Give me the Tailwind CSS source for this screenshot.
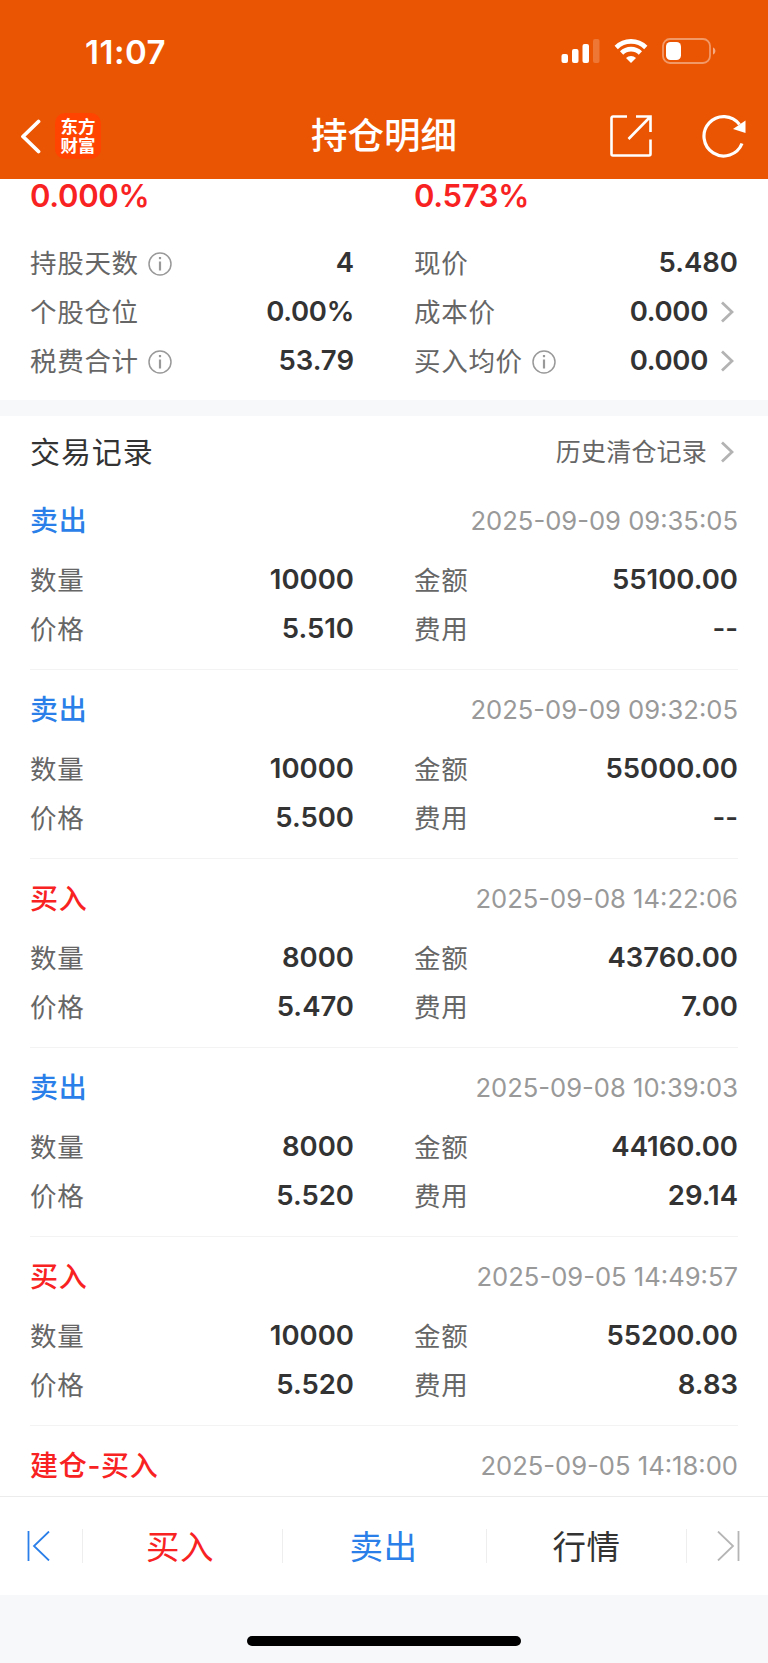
<!DOCTYPE html>
<html lang="zh-CN">
<head>
    <meta charset="UTF-8">
    <meta name="viewport" content="width=device-width, initial-scale=1.0">
    <title>持仓明细</title>
    <script src="https://cdn.jsdelivr.net/npm/@tailwindcss/browser@4"></script>
</head>
<body class="bg-white font-[Inter,'Noto_Sans_CJK_SC',sans-serif] text-[#333]">
    <div class="flex flex-col h-[1663px] overflow-hidden">
        <!-- Header -->
        <header class="h-[179px] shrink-0 bg-[#ea5504] text-white">
            <!-- Status bar -->
            <div class="flex items-center justify-between h-[102px] pl-[85px] pr-[52px]">
                <span class="text-[33px] font-semibold leading-none tracking-[0.5px] pt-[2px]">11:07</span>
                <div class="flex items-center">
                    <svg class="w-[39px] h-[26px]" viewBox="0 0 39 26" fill="#fff">
                        <rect x="0.5" y="16" width="6.5" height="9" rx="2"/>
                        <rect x="11" y="11" width="6.5" height="14" rx="2"/>
                        <rect x="21.5" y="6" width="6.5" height="19" rx="2"/>
                        <rect x="32" y="1" width="6.5" height="24" rx="2" opacity=".2"/>
                    </svg>
                    <svg class="w-[34px] h-[26px] ml-[14px]" viewBox="0 0 34 26">
                        <g fill="none" stroke="#fff" stroke-width="4.6">
                            <path d="M2.2 9.5a21 21 0 0 1 29.6 0"/>
                            <path d="M7.6 15a13.3 13.3 0 0 1 18.8 0"/>
                        </g>
                        <path d="M17 25l-5-5.1a7.2 7.2 0 0 1 10 0z" fill="#fff"/>
                    </svg>
                    <svg class="w-[54px] h-[26px] ml-[14px]" viewBox="0 0 54 26">
                        <rect x="1" y="1" width="47" height="24" rx="7" fill="none" stroke="#fff" stroke-opacity=".4" stroke-width="1.8"/>
                        <rect x="4" y="4" width="15" height="18" rx="4.5" fill="#fff"/>
                        <path d="M51 9.5c3.2 1.2 3.2 5.8 0 7z" fill="#fff" opacity=".5"/>
                    </svg>
                </div>
            </div>
            <!-- Nav bar -->
            <div class="grid grid-cols-[1fr_auto_1fr] items-center h-[68px]">
                <div class="flex items-center pl-[20px]">
                    <svg class="w-[21px] h-[35px]" viewBox="0 0 21 35" fill="none" stroke="#fff" stroke-width="3.8" stroke-linecap="round" stroke-linejoin="round"><path d="M18.5 2.5L3 17.5l15.5 15"/></svg>
                    <div class="flex flex-col items-center justify-center w-[46px] h-[46px] ml-[14px] rounded-[10px] bg-[#ff4401] text-[17.5px] leading-[19px] font-bold">
                        <span>东方</span>
                        <span>财富</span>
                    </div>
                </div>
                <h1 class="text-[36.5px] leading-none font-medium pt-px">持仓明细</h1>
                <div class="flex items-center justify-end pr-[22px]">
                    <svg class="w-[42px] h-[42px]" viewBox="0 0 42 42" fill="none" stroke="#fff" stroke-width="2.6">
                        <path d="M17 1.5H3A1.5 1.5 0 0 0 1.5 3v36A1.5 1.5 0 0 0 3 40.5h36a1.5 1.5 0 0 0 1.5-1.5V24.5"/>
                        <path d="M26 1.5h14.5V17M40.5 1.5L18.5 24"/>
                    </svg>
                    <svg class="w-[44px] h-[44px] ml-[50px]" viewBox="0 0 44 44">
                        <path d="M40 29.5A19.7 19.7 0 1 1 37.5 10.5" fill="none" stroke="#fff" stroke-width="3.2"/>
                        <path d="M43.5 6.5v12.5L31 15z" fill="#fff"/>
                    </svg>
                </div>
            </div>
        </header>

        <!-- Summary -->
        <section class="shrink-0 h-[221px] px-[30px]">
            <div class="grid grid-cols-2 gap-x-[60px] h-[34px] text-[31px] leading-[34px] font-semibold tracking-[-0.3px] text-[#f82223]">
                <span>0.000%</span>
                <span>0.573%</span>
            </div>
            <div class="grid grid-cols-2 gap-x-[60px] pt-[25px]">
                <div class="flex items-center h-[49px]">
                    <span class="text-[26.5px] tracking-[0.7px] text-[#666] pt-[2px]">持股天数</span>
                    <svg class="w-[24px] h-[24px] ml-[9px] mt-[2px]" viewBox="0 0 24 24" fill="none" stroke="#999" stroke-width="1.5"><circle cx="12" cy="12" r="11"/><path d="M12 9.5v9" stroke-width="2.2"/><path d="M12 5v2.2" stroke-width="2.2"/></svg>
                    <span class="ml-auto text-[27.5px] font-semibold pt-px">4</span>
                </div>
                <div class="flex items-center h-[49px]">
                    <span class="text-[26.5px] tracking-[0.7px] text-[#666] pt-[2px]">现价</span>
                    <span class="ml-auto text-[27.5px] font-semibold pt-px">5.480</span>
                </div>
                <div class="flex items-center h-[49px]">
                    <span class="text-[26.5px] tracking-[0.7px] text-[#666] pt-[2px]">个股仓位</span>
                    <span class="ml-auto text-[27.5px] tracking-[-0.3px] font-semibold pt-px">0.00%</span>
                </div>
                <div class="flex items-center h-[49px]">
                    <span class="text-[26.5px] tracking-[0.7px] text-[#666] pt-[2px]">成本价</span>
                    <span class="ml-auto text-[27.5px] tracking-[-0.3px] font-semibold pt-px">0.000</span>
                    <svg class="w-[13px] h-[22px] mr-[4px] ml-[13px]" viewBox="0 0 13 22" fill="none" stroke="#b3b3b3" stroke-width="2.8"><path d="M1 1.5L11 11 1 20.5"/></svg>
                </div>
                <div class="flex items-center h-[49px]">
                    <span class="text-[26.5px] tracking-[0.7px] text-[#666] pt-[2px]">税费合计</span>
                    <svg class="w-[24px] h-[24px] ml-[9px] mt-[2px]" viewBox="0 0 24 24" fill="none" stroke="#999" stroke-width="1.5"><circle cx="12" cy="12" r="11"/><path d="M12 9.5v9" stroke-width="2.2"/><path d="M12 5v2.2" stroke-width="2.2"/></svg>
                    <span class="ml-auto text-[27.5px] font-semibold pt-px">53.79</span>
                </div>
                <div class="flex items-center h-[49px]">
                    <span class="text-[26.5px] tracking-[0.7px] text-[#666] pt-[2px]">买入均价</span>
                    <svg class="w-[24px] h-[24px] ml-[9px] mt-[2px]" viewBox="0 0 24 24" fill="none" stroke="#999" stroke-width="1.5"><circle cx="12" cy="12" r="11"/><path d="M12 9.5v9" stroke-width="2.2"/><path d="M12 5v2.2" stroke-width="2.2"/></svg>
                    <span class="ml-auto text-[27.5px] tracking-[-0.3px] font-semibold pt-px">0.000</span>
                    <svg class="w-[13px] h-[22px] mr-[4px] ml-[13px]" viewBox="0 0 13 22" fill="none" stroke="#b3b3b3" stroke-width="2.8"><path d="M1 1.5L11 11 1 20.5"/></svg>
                </div>
            </div>
        </section>

        <div class="h-4 shrink-0 bg-[#f6f8fa]"></div>

        <!-- Trade records -->
        <section class="flex-1 min-h-0 overflow-hidden px-[30px]">
            <div class="flex items-center h-[65px] pt-[7px]">
                <h2 class="text-[30px] tracking-[0.9px]">交易记录</h2>
                <span class="ml-auto text-[25px] tracking-[0.2px] text-[#666] pt-px">历史清仓记录</span>
                <svg class="w-[13px] h-[22px] mr-[4px] ml-[14px]" viewBox="0 0 13 22" fill="none" stroke="#b3b3b3" stroke-width="2.8"><path d="M1 1.5L11 11 1 20.5"/></svg>
            </div>
            <div id="records"></div>
        </section>

        <!-- Bottom tabs -->
        <nav class="flex items-center h-[99px] shrink-0 border-t border-[#ececec] text-[33.5px] tracking-[0.5px]">
            <div class="flex items-center w-[82px] pl-[27px]">
                <svg class="w-[24px] h-[30px]" viewBox="0 0 24 30" fill="none" stroke="#2b7fe8" stroke-width="1.8"><path d="M1.5 0v30M22 .5L7 15l15 14.5"/></svg>
            </div>
            <div class="w-px h-[34px] bg-[#eee]"></div>
            <a href="#" class="w-[199px] text-center text-[#f82223] pt-[2px] pr-[5px]">买入</a>
            <div class="w-px h-[34px] bg-[#eee]"></div>
            <a href="#" class="w-[203px] text-center text-[#2b7fe8] pt-[2px] pr-[2px]">卖出</a>
            <div class="w-px h-[34px] bg-[#eee]"></div>
            <a href="#" class="flex-1 text-center pt-[2px]">行情</a>
            <div class="w-px h-[34px] bg-[#eee]"></div>
            <div class="flex items-center justify-end w-[81px] pr-[28px]">
                <svg class="w-[24px] h-[30px]" viewBox="0 0 24 30" fill="none" stroke="#b5b5b5" stroke-width="1.8"><path d="M22.5 0v30M2 .5L17 15 2 29.5"/></svg>
            </div>
        </nav>
        <div class="flex justify-center h-[68px] shrink-0 bg-[#f6f8fa] pt-[41px]">
            <div class="w-[274px] h-[10px] rounded-full bg-black"></div>
        </div>
    </div>

    <script>
        const records = [
            { type: '卖出', time: '2025-09-09 09:35:05', qty: '10000', amount: '55100.00', price: '5.510', fee: '--' },
            { type: '卖出', time: '2025-09-09 09:32:05', qty: '10000', amount: '55000.00', price: '5.500', fee: '--' },
            { type: '买入', time: '2025-09-08 14:22:06', qty: '8000', amount: '43760.00', price: '5.470', fee: '7.00' },
            { type: '卖出', time: '2025-09-08 10:39:03', qty: '8000', amount: '44160.00', price: '5.520', fee: '29.14' },
            { type: '买入', time: '2025-09-05 14:49:57', qty: '10000', amount: '55200.00', price: '5.520', fee: '8.83' },
            { type: '建仓-买入', time: '2025-09-05 14:18:00' },
        ];

        const cell = (label, value) => `
            <div class="flex items-center justify-between h-[49px]">
                <span class="text-[26.5px] tracking-[0.7px] text-[#666] pt-[2px]">${label}</span>
                <span class="text-[27.5px] font-semibold pt-px">${value}</span>
            </div>`;

        document.getElementById('records').innerHTML = records.map(r => `
            <div class="h-[189px] border-b border-[#f3f3f3]">
                <div class="flex items-center justify-between h-[74px] pt-[4px]">
                    <span class="text-[28px] tracking-[0.7px] font-medium pt-[2px] ${r.type === '卖出' ? 'text-[#2b7fe8]' : 'text-[#f82223]'}">${r.type}</span>
                    <span class="text-[25.6px] text-[#999] pt-[2px]">${r.time}</span>
                </div>
                ${r.qty ? `<div class="grid grid-cols-2 gap-x-[60px]">
                    ${cell('数量', r.qty)}${cell('金额', r.amount)}${cell('价格', r.price)}${cell('费用', r.fee)}
                </div>` : ''}
            </div>`).join('');
    </script>
</body>
</html>
